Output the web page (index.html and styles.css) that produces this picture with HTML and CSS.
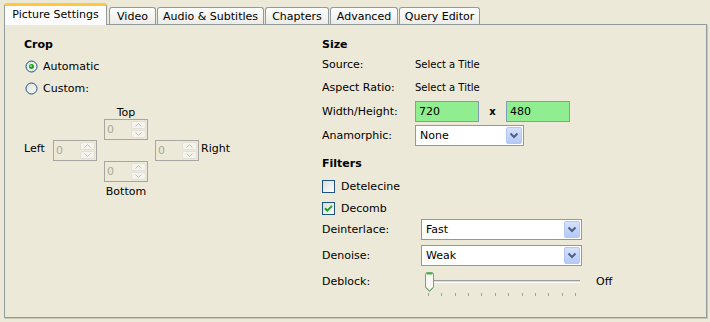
FILE: index.html
```html
<!DOCTYPE html>
<html>
    <head>
        <meta charset="utf-8">
        <title>Picture Settings</title>
        <link rel="stylesheet" href="styles.css">
    </head>
    <body>
        <svg width="0" height="0" class="defs">
            <defs>
                <linearGradient id="well" x1="0" y1="0" x2="1" y2="1">
                    <stop offset="0" stop-color="#DCDCD7"/>
                    <stop offset="1" stop-color="#FFFFFF"/>
                </linearGradient>
                <linearGradient id="drop" x1="0" y1="0" x2="0" y2="1">
                    <stop offset="0" stop-color="#D6E2FD"/>
                    <stop offset="1" stop-color="#B3C8F6"/>
                </linearGradient>
            </defs>
        </svg>

        <div class="window">
            <div class="tabs">
                <div class="tab active t-pic">Picture Settings</div>
                <div class="tab t-video">Video</div>
                <div class="tab t-audio">Audio &amp; Subtitles</div>
                <div class="tab t-chap">Chapters</div>
                <div class="tab t-adv">Advanced</div>
                <div class="tab t-query">Query Editor</div>
            </div>

            <div class="page">
                <div class="col left">
                    <div class="heading">Crop</div>
                    <div class="opt first">
                        <svg class="radio" width="13" height="13"><circle cx="6.5" cy="6.5" r="5.5" fill="url(#well)" stroke="#1C5180"/><circle cx="6.5" cy="6.5" r="2.5" fill="#21A121"/><circle cx="6" cy="6" r="1" fill="#8BE08B"/></svg>
                        Automatic
                    </div>
                    <div class="opt">
                        <svg class="radio" width="13" height="13"><circle cx="6.5" cy="6.5" r="5.5" fill="url(#well)" stroke="#1C5180"/></svg>
                        Custom:
                    </div>

                    <div class="crop">
                        <div class="lbl-top">Top</div>
                        <div class="spin s-top"><span class="val">0</span><span class="btns"><span class="btn"><svg width="7" height="4"><path d="M0.5 3.5 L3.5 0.5 L6.5 3.5" fill="none" stroke="#C4C2B8"/></svg></span><span class="btn"><svg width="7" height="4"><path d="M0.5 0.5 L3.5 3.5 L6.5 0.5" fill="none" stroke="#C4C2B8"/></svg></span></span></div>
                        <div class="lbl-left">Left</div>
                        <div class="spin s-left"><span class="val">0</span><span class="btns"><span class="btn"><svg width="7" height="4"><path d="M0.5 3.5 L3.5 0.5 L6.5 3.5" fill="none" stroke="#C4C2B8"/></svg></span><span class="btn"><svg width="7" height="4"><path d="M0.5 0.5 L3.5 3.5 L6.5 0.5" fill="none" stroke="#C4C2B8"/></svg></span></span></div>
                        <div class="spin s-right"><span class="val">0</span><span class="btns"><span class="btn"><svg width="7" height="4"><path d="M0.5 3.5 L3.5 0.5 L6.5 3.5" fill="none" stroke="#C4C2B8"/></svg></span><span class="btn"><svg width="7" height="4"><path d="M0.5 0.5 L3.5 3.5 L6.5 0.5" fill="none" stroke="#C4C2B8"/></svg></span></span></div>
                        <div class="lbl-right">Right</div>
                        <div class="spin s-bottom"><span class="val">0</span><span class="btns"><span class="btn"><svg width="7" height="4"><path d="M0.5 3.5 L3.5 0.5 L6.5 3.5" fill="none" stroke="#C4C2B8"/></svg></span><span class="btn"><svg width="7" height="4"><path d="M0.5 0.5 L3.5 3.5 L6.5 0.5" fill="none" stroke="#C4C2B8"/></svg></span></span></div>
                        <div class="lbl-bottom">Bottom</div>
                    </div>
                </div>

                <div class="col right">
                    <div class="heading">Size</div>
                    <div class="row r-source"><span class="label">Source:</span><span class="info">Select a Title</span></div>
                    <div class="row r-aspect"><span class="label">Aspect Ratio:</span><span class="info">Select a Title</span></div>
                    <div class="row r-dims">
                        <span class="label">Width/Height:</span>
                        <span class="num">720</span>
                        <span class="times">x</span>
                        <span class="num">480</span>
                    </div>
                    <div class="row r-anam">
                        <span class="label">Anamorphic:</span>
                        <div class="select s-anam"><span>None</span><svg width="16" height="17"><rect x="0.5" y="0.5" width="15" height="16" rx="1.5" fill="url(#drop)" stroke="#B4C7F3"/><path d="M4.5 6.5 L8 10 L11.5 6.5" fill="none" stroke="#4D6185" stroke-width="2"/></svg></div>
                    </div>

                    <div class="heading filters">Filters</div>
                    <div class="row check r-tele">
                        <svg class="box" width="13" height="13"><rect x="0.5" y="0.5" width="12" height="12" fill="url(#well)" stroke="#1C5180"/></svg>
                        Detelecine
                    </div>
                    <div class="row check r-comb">
                        <svg class="box" width="13" height="13"><rect x="0.5" y="0.5" width="12" height="12" fill="url(#well)" stroke="#1C5180"/><path d="M3 6.2 L5.3 8.6 L10 3.9" fill="none" stroke="#21A121" stroke-width="2"/></svg>
                        Decomb
                    </div>
                    <div class="row r-deint">
                        <span class="label wide">Deinterlace:</span>
                        <div class="select s-filter"><span>Fast</span><svg width="16" height="17"><rect x="0.5" y="0.5" width="15" height="16" rx="1.5" fill="url(#drop)" stroke="#B4C7F3"/><path d="M4.5 6.5 L8 10 L11.5 6.5" fill="none" stroke="#4D6185" stroke-width="2"/></svg></div>
                    </div>
                    <div class="row r-denoise">
                        <span class="label wide">Denoise:</span>
                        <div class="select s-filter"><span>Weak</span><svg width="16" height="17"><rect x="0.5" y="0.5" width="15" height="16" rx="1.5" fill="url(#drop)" stroke="#B4C7F3"/><path d="M4.5 6.5 L8 10 L11.5 6.5" fill="none" stroke="#4D6185" stroke-width="2"/></svg></div>
                    </div>
                    <div class="row r-deblock">
                        <span class="label wide">Deblock:</span>
                        <div class="slider">
                            <div class="track"></div>
                            <div class="ticks"></div>
                            <svg class="thumb" width="11" height="21">
                                <path d="M1.5 2.5 Q1.5 0.5 3.5 0.5 H7.5 Q9.5 0.5 9.5 2.5 V15.5 L5.5 19.5 L1.5 15.5 Z" fill="#F7F7F4" stroke="#8F9190"/>
                                <path d="M2.5 1.5 H8.5" stroke="#3CBF3C" stroke-width="2"/>
                                <path d="M2.2 15.6 L5.5 18.8 L8.8 15.6" fill="none" stroke="#3CBF3C"/>
                            </svg>
                        </div>
                        <span class="off">Off</span>
                    </div>
                </div>
            </div>
        </div>
    </body>
</html>
```

FILE: styles.css
```css
html, body {
    height: 100%;
}
body {
    background-color: #ECE9D8;
    margin: 0;
    font-family: "DejaVu Sans", Tahoma, Verdana, sans-serif;
    font-size: 11px;
    color: black;
    overflow: hidden;
}

.defs {
    position: absolute;
}

.window {
    padding: 3px 3px 0 4px;
}

/* tab strip */
.tabs {
    display: flex;
    align-items: flex-end;
    gap: 1px;
    height: 21px;
}
.tab {
    box-sizing: border-box;
    height: 17px;
    border: 1px solid #919B9C;
    border-bottom: none;
    border-radius: 3px 3px 0 0;
    background: linear-gradient(#FFFFFF, #ECEBE6);
    display: flex;
    align-items: center;
    justify-content: center;
    padding-top: 1px;
    white-space: nowrap;
}
.tab.active {
    height: 22px;
    margin-bottom: -1px;
    border-top: 3px solid #FFC83C;
    background: #FCFCFE;
    padding-top: 0;
    padding-bottom: 3px;
    position: relative;
    z-index: 1;
}
.t-pic { width: 103px; }
.t-video { width: 47px; margin-left: 1px; }
.t-audio { width: 107px; }
.t-chap { width: 64px; }
.t-adv { width: 68px; }
.t-query { width: 81px; }

/* tab page */
.page {
    box-sizing: border-box;
    height: 294px;
    border: 1px solid #919B9C;
    box-shadow: 1px 1px 0 #C9C5B3;
    display: flex;
    padding: 13px 0 0 19px;
}
.col {
    display: flex;
    flex-direction: column;
}
.left {
    width: 298px;
}
.right {
    flex: 1;
}

.heading {
    font-weight: bold;
    height: 14px;
    line-height: 14px;
}

/* radio options */
.opt {
    display: flex;
    align-items: center;
    height: 22px;
}
.opt.first {
    margin-top: 3px;
}
.radio {
    margin: 0 5px 0 1px;
}

/* crop spinners */
.crop {
    display: grid;
    grid-template-columns: 22px 44px 44px 44px auto;
    grid-template-rows: 13px 21px 21px 21px 15px;
    column-gap: 7px;
    margin-top: 7px;
}
.lbl-top {
    grid-column: 3;
    grid-row: 1;
    text-align: center;
    line-height: 13px;
}
.lbl-bottom {
    grid-column: 3;
    grid-row: 5;
    text-align: center;
    line-height: 13px;
    padding-top: 3px;
}
.lbl-left {
    grid-column: 1;
    grid-row: 3;
    line-height: 13px;
    padding-top: 2px;
}
.lbl-right {
    grid-column: 5;
    grid-row: 3;
    line-height: 13px;
    padding-top: 2px;
    margin-left: -5px;
}
.s-top { grid-column: 3; grid-row: 2; }
.s-left { grid-column: 2; grid-row: 3; }
.s-right { grid-column: 4; grid-row: 3; }
.s-bottom { grid-column: 3; grid-row: 4; }

.spin {
    box-sizing: border-box;
    border: 1px solid #A7A6A0;
    display: flex;
    height: 21px;
}
.spin .val {
    flex: 1;
    color: #ACA899;
    padding-left: 2px;
    line-height: 19px;
}
.btns {
    display: flex;
    flex-direction: column;
    width: 15px;
    padding: 1px 1px 1px 0;
    gap: 1px;
}
.btn {
    flex: 1;
    background: #F4F3EE;
    border: 1px solid #E3E1D8;
    border-radius: 2px;
    display: flex;
    align-items: center;
    justify-content: center;
}

/* right column rows */
.row {
    display: flex;
    align-items: center;
}
.label {
    width: 93px;
    flex: none;
}
.label.wide {
    width: 99px;
}
.info {
    font-size: 10px;
}
.r-source { height: 23px; margin-top: 1px; }
.r-aspect { height: 23px; }
.r-dims { height: 24px; }
.r-anam { height: 25px; }

.num {
    box-sizing: border-box;
    width: 64px;
    height: 21px;
    border: 1px solid #7F9DB9;
    background: #90EE90;
    padding-left: 3px;
    line-height: 19px;
}
.times {
    width: 27px;
    text-align: center;
    font-weight: bold;
    font-size: 10px;
}

.select {
    box-sizing: border-box;
    height: 21px;
    border: 1px solid #7F9DB9;
    background: white;
    display: flex;
    align-items: center;
    justify-content: space-between;
    padding: 0 1px 0 4px;
}
.s-anam { width: 109px; }
.s-filter { width: 161px; }

.filters {
    margin-top: 9px;
}
.check {
    height: 22px;
}
.r-tele { margin-top: 4px; }
.box {
    margin-right: 6px;
}
.r-deint { height: 21px; }
.r-denoise { height: 21px; margin-top: 5px; }
.r-deblock { height: 27px; margin-top: 5px; align-items: flex-start; }
.r-deblock .label { padding-top: 4px; }

/* slider */
.slider {
    position: relative;
    width: 164px;
    height: 27px;
}
.track {
    position: absolute;
    left: 9px;
    top: 9px;
    width: 150px;
    height: 1px;
    border-top: 1px solid #9D9C99;
    border-bottom: 1px solid #FFFFFF;
    background: #DCDAD2;
}
.ticks {
    position: absolute;
    left: 7px;
    top: 22px;
    width: 149px;
    height: 3px;
    background: repeating-linear-gradient(90deg, #A3A192 0 1px, transparent 1px 13.36px);
}
.thumb {
    position: absolute;
    left: 3px;
    top: 1px;
}
.off {
    margin-left: 11px;
    padding-top: 4px;
}
```
